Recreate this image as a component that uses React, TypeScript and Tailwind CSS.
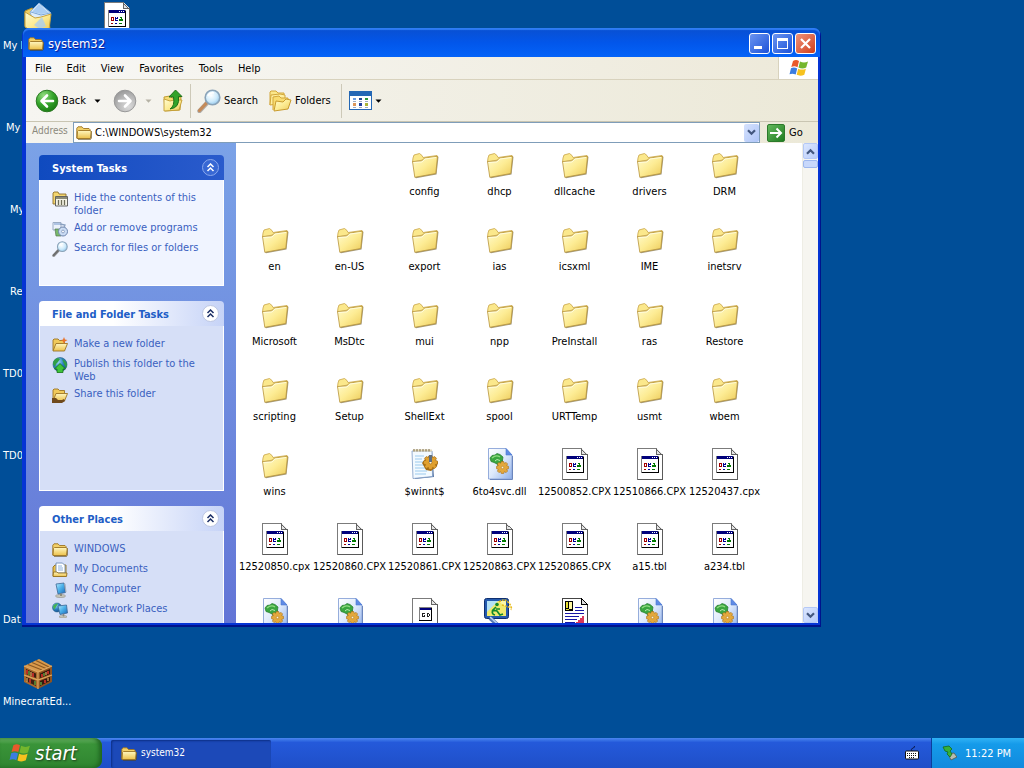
import type { ReactNode } from "react";

const UI_FONT = "font-['DejaVu_Sans_Condensed','Noto_Sans',sans-serif]";

function Gradients() {
  return (
    <svg width="0" height="0" className="absolute" aria-hidden="true">
      <defs>
        <linearGradient id="folder" x1="0" y1="0" x2="1" y2="1">
          <stop offset="0" stopColor="#fffcd2" />
          <stop offset="0.5" stopColor="#fdec94" />
          <stop offset="1" stopColor="#ecca58" />
        </linearGradient>
        <linearGradient id="smallFolder" x1="0" y1="0" x2="0" y2="1">
          <stop offset="0" stopColor="#fff7c0" />
          <stop offset="1" stopColor="#ecc14b" />
        </linearGradient>
        <radialGradient id="green" cx="0.35" cy="0.25" r="0.85">
          <stop offset="0" stopColor="#93dc80" />
          <stop offset="0.5" stopColor="#35a52c" />
          <stop offset="1" stopColor="#16750f" />
        </radialGradient>
        <radialGradient id="grey" cx="0.35" cy="0.25" r="0.85">
          <stop offset="0" stopColor="#dcdcdc" />
          <stop offset="0.6" stopColor="#b4b4b4" />
          <stop offset="1" stopColor="#929292" />
        </radialGradient>
        <radialGradient id="lens" cx="0.4" cy="0.35" r="0.7">
          <stop offset="0" stopColor="#ffffff" />
          <stop offset="0.6" stopColor="#cdeafb" />
          <stop offset="1" stopColor="#8fc4ea" />
        </radialGradient>
        <linearGradient id="page" x1="0" y1="0" x2="1" y2="1">
          <stop offset="0" stopColor="#ffffff" />
          <stop offset="0.5" stopColor="#dde9fb" />
          <stop offset="1" stopColor="#8fb0ea" />
        </linearGradient>
        <radialGradient id="globe" cx="0.35" cy="0.3" r="0.8">
          <stop offset="0" stopColor="#9fdcf5" />
          <stop offset="0.5" stopColor="#2b7fc4" />
          <stop offset="1" stopColor="#114a86" />
        </radialGradient>
        <linearGradient id="screen" x1="0" y1="0" x2="1" y2="1">
          <stop offset="0" stopColor="#b5ecff" />
          <stop offset="0.5" stopColor="#48aee8" />
          <stop offset="1" stopColor="#1c66b8" />
        </linearGradient>
      </defs>
    </svg>
  );
}

/* ---------- large 32px icons ---------- */

function FolderIcon() {
  return (
    <svg width="32" height="32" viewBox="0 0 32 32">
      <path d="M6 29.500 7 30.300 27.500 26.500 29.500 9 28.500 8Z" fill="#5a4a1c" opacity=".55" />
      <path d="M3.500 14 4 10 5 7 10.500 5.500 13 7.500 14 9.500 28 7.500 28.500 9Z" fill="#fbe88c" stroke="#c9a547" strokeWidth=".8" strokeLinejoin="round" />
      <path d="M3.500 13.500 12.500 13 15.500 10 28.500 8.300 26.800 25.500 5.800 29.300Z" fill="url(#folder)" stroke="#b8933a" strokeWidth=".8" strokeLinejoin="round" />
      <path d="M4.500 14.500 13 14 16 11 27 9.500" fill="none" stroke="#fffde2" strokeWidth=".9" />
    </svg>
  );
}

function SheetOutline() {
  return (
    <>
      <path d="M3.500 .5H22.500L28.500 6.500V31.500H3.500Z" fill="#fff" stroke="#7b7b7b" />
      <path d="M22.500 .5V6.500H28.500Z" fill="#e4e4e4" stroke="#555" strokeWidth=".9" />
      <path d="M28.500 7V31.500H4" fill="none" stroke="#5a5a5a" />
    </>
  );
}

function AppFileIcon() {
  return (
    <svg width="32" height="32" viewBox="0 0 32 32" shapeRendering="crispEdges">
      <SheetOutline />
      <path d="M7 8h18v17H7z" fill="#808080" />
      <path d="M8 9h16v15H8z" fill="#fff" />
      <path d="M8 8h16v3H8z" fill="#00007b" />
      <path d="M18 9h1v1h-1zM20 9h1v1h-1zM22 9h1v1h-1z" fill="#fff" />
      <path d="M24 9h1v16H8v-1h16z" fill="#000" />
      <path d="M10 15h3v1h-3zM10 16h1v2h-1zM12 16h1v3h-1zM10 18h2v1h-2z" fill="#a00000" />
      <path d="M14 15h1v4h-1zM15 16h2v1h-2zM16 15h1v1h-1zM15 18h2v1h-2z" fill="#000090" />
      <path d="M19 15h2v1h-2zM18 17h4v2h-4zM20 16h1v1h-1z" fill="#007800" />
      <path d="M10 21h2v1h-2z" fill="#a00000" />
      <path d="M14 21h2v1h-2z" fill="#000090" />
      <path d="M18 21h3v1h-3z" fill="#007800" />
    </svg>
  );
}

function SmallAppFileIcon() {
  return (
    <svg width="32" height="32" viewBox="0 0 32 32" shapeRendering="crispEdges">
      <SheetOutline />
      <path d="M10 9h13v14H10z" fill="#808080" />
      <path d="M11 10h11v12H11z" fill="#fff" />
      <path d="M11 10h11v2H11z" fill="#00007b" />
      <path d="M22 10h1v13H10v-1h12z" fill="#000" />
      <path d="M13 15h3v1h-3zM13 16h1v2h-1zM15 17h1v2h-3v-1h2zM18 15h1v4h-1zM19 15h1v1h-1zM20 16h1v2h-1zM19 18h1v1h-1z" fill="#222" />
    </svg>
  );
}

function Gear({ x, y, r, fill, stroke }: { x: number; y: number; r: number; fill: string; stroke: string }) {
  return (
    <g transform={`translate(${x} ${y}) scale(${r / 10})`}>
      <path
        d="M-2-10H2L3-7 6-8.500 8.500-6 7-3 10-2V2L7 3 8.500 6 6 8.500 3 7 2 10H-2L-3 7-6 8.500-8.500 6-7 3-10 2V-2L-7-3-8.500-6-6-8.500-3-7Z"
        fill={fill}
        stroke={stroke}
        strokeWidth="1"
      />
      <circle r="2" fill="#fff6d8" stroke={stroke} strokeWidth="1" />
    </g>
  );
}

function DllIcon() {
  return (
    <svg width="32" height="32" viewBox="0 0 32 32">
      <path d="M4.500 .5H22L28 7V31H4.500Z" fill="url(#page)" stroke="#8aa4d8" strokeWidth=".9" />
      <path d="M22 .5 22 7 28 7Z" fill="#5f8be6" stroke="#4d78d0" strokeWidth=".6" />
      <path d="M28.500 8V31.500H6" fill="none" stroke="#6b86bd" />
      <path d="M12 14 18 11 20 15 14 19Z" fill="#2a6d3f" />
      <path d="M6 10 8 7.500 11 7 13 5.500 16 6.500 19 9 18.500 12 17 15 13 16 10 14.500 7 13.500Z" fill="#3aa640" stroke="#237a2c" strokeWidth=".7" />
      <path d="M8 10q4-3.500 8-1" fill="none" stroke="#8fdc80" strokeWidth="1.300" />
      <path d="M11 13 13 11.500l3 1" fill="none" stroke="#c9f0bb" strokeWidth=".9" />
      <Gear x={18.5} y={19.5} r={6} fill="#e3a83c" stroke="#a9721c" />
    </svg>
  );
}

function IniIcon() {
  return (
    <svg width="32" height="32" viewBox="0 0 32 32">
      <path d="M4 3 23 2 25 29 6 31Z" fill="#5d7aa6" />
      <path d="M3 3H23L23.500 28.500 4 30.500Z" fill="#f3faff" stroke="#7d9ac4" strokeWidth=".8" />
      <path d="M4 1.500h19v2H4z" fill="#e3d9bb" />
      <path d="M5 1v2.500M8 1v2.500M11 1v2.500M14 1v2.500M17 1v2.500M20 1v2.500" stroke="#7a6a45" />
      <path d="M6 8h9M6 11h7M6 14h8M6 17h9M6 20h14M6 23h12M6 26h11" stroke="#9cc9ee" strokeWidth="1.200" />
      <path d="M13 15l4-5 3 2-1-4 3 1 2 3 5 2-1 4-6 5-5-1z" fill="#a46c14" />
      <Gear x={21.5} y={14.5} r={7} fill="#e0a02e" stroke="#a46c14" />
      <path d="M20 7h3v7h-3z" fill="#5f6e80" />
    </svg>
  );
}

function AccessIcon() {
  return (
    <svg width="32" height="32" viewBox="0 0 32 32">
      <rect x=".5" y=".5" width="24" height="20" rx="2" fill="#2459ad" stroke="#0e2f70" />
      <rect x="3" y="3" width="19" height="15" fill="#f0ea6e" />
      <path d="M3 3h11L3 14z" fill="#b4e2f5" />
      <path d="M14 3h8v6z" fill="#fbf7a8" />
      <circle cx="13" cy="6.500" r="1.800" fill="#128a2c" />
      <path d="M12 9 9 12l4 1 3 4 3-1M12 11h4M9 12q-2 4 2 5" fill="none" stroke="#128a2c" strokeWidth="1.700" />
      <path d="M15 4q5-4 9 0t3 8M18 7l10 3" fill="none" stroke="#e8bb18" strokeWidth="1.500" strokeDasharray="2 1" />
      <path d="M6 20 18 31" stroke="#5577b3" strokeWidth="4" />
      <path d="M6 19 18 30" stroke="#b9d2f3" strokeWidth="1.500" />
    </svg>
  );
}

function WritingFileIcon() {
  return (
    <svg width="32" height="32" viewBox="0 0 32 32" shapeRendering="crispEdges">
      <path d="M3.500 .5H22.500L28.500 6.500V31.500H3.500Z" fill="#fff" stroke="#444" />
      <path d="M22.500 .5V6.500H28.500Z" fill="#ddd" stroke="#000" />
      <path d="M6 3h8v10H6z" fill="#000" />
      <path d="M7 4h2v6H7zM7 11h3v1H7z" fill="#e8df32" />
      <path d="M10 4h3v7h-3z" fill="#fff8a0" />
      <path d="M16 9h7v1h-7zM16 12h9v1h-9zM6 15h19v1H6zM6 18h14v1H6zM6 21h12v1H6zM6 24h10v1H6zM6 27h9v1H6z" fill="#1717a5" />
      <path d="M14 26h3v-2h2v-2h2v-2h2v-2h2v10h-3v-3h-5v2h-3z" fill="#d8365a" />
    </svg>
  );
}

function MailFolderIcon() {
  return (
    <svg width="32" height="32" viewBox="0 0 32 32">
      <path d="M3 9 10 6 13 8 26 10 28 27 8 28 3 24Z" fill="#f0cf61" stroke="#b8932f" />
      <path d="M8 10 17 1 29 11 21 24 12 22Z" fill="#dcecfb" stroke="#8db3dc" />
      <path d="M9 10 19 13 28 11" fill="none" stroke="#7ba6d6" />
      <path d="M17 2 27 11 19 12 10 10Z" fill="#a9cdf3" />
      <path d="M3 10 13 16 19 15 29 12 27 28H8L3 25Z" fill="url(#folder)" stroke="#c9a23a" />
      <path d="M12 23 20 15 24 24 18 27Z" fill="#a9cdf0" opacity=".8" />
    </svg>
  );
}

function BookshelfIcon() {
  return (
    <svg width="32" height="32" viewBox="0 0 32 32">
      <path d="M2 8 16 14V31L2 24Z" fill="#a8692c" />
      <path d="M30 8 16 14V31L30 24Z" fill="#8d5320" />
      <path d="M2 8 17 1 30 8 16 14Z" fill="#d99a4c" />
      <path d="M6 6.500 20 12M10 4.500 24 10.500M14 2.500 27 9" stroke="#8b5823" strokeWidth="1.200" />
      <path d="M4 11 14 15.500V20L4 16ZM4 19 14 23V28L4 23Z" fill="#3b1f12" />
      <path d="M18 15.500 28 11V16L18 20ZM18 23 28 19V23L18 28Z" fill="#35190e" />
      <path d="M5 12v4M11 15v4M8 21v4M20 16v3M26 13v3M23 22v3" stroke="#c62f2a" strokeWidth="1.800" />
      <path d="M7 13v4M13 23v4M22 15v3M19 24v3" stroke="#5d9b3d" strokeWidth="1.500" />
      <path d="M9 14v4M5 20v4M24 14v3M26 20v3" stroke="#d9a05a" strokeWidth="1.300" />
      <path d="M2 8 16 14 30 8M16 14V31M2 17 16 22 30 17" fill="none" stroke="#e0a860" strokeWidth="1.200" />
    </svg>
  );
}

/* ---------- toolbar and 16px icons ---------- */

function SmallFolder({ size = 16 }: { size?: number }) {
  return (
    <svg width={size} height={size} viewBox="0 0 16 16">
      <path d="M2 14.500H14.500L15.500 13V6" fill="none" stroke="#5a4718" strokeOpacity=".6" />
      <path d="M.8 3.200 2 1.800H6L7.500 3.500H13L14 4.500V13H.8Z" fill="#f3d067" stroke="#9c7422" strokeWidth=".9" />
      <path d="M1 13.500 1.500 6.500 2.500 5.500H14L15.200 6.500 14.500 13.500Z" fill="url(#smallFolder)" stroke="#9c7422" strokeWidth=".9" />
    </svg>
  );
}

function OpenFolder({ size = 16, badge }: { size?: number; badge?: ReactNode }) {
  return (
    <svg width={size} height={size} viewBox="0 0 16 16">
      <path d="M1 13.500V3L2 2H6L7.500 3.500H12.500V6" fill="#f0c95a" stroke="#9c7422" strokeWidth=".9" />
      <path d="M1 14 4 6.500H15.500L12.500 14Z" fill="url(#smallFolder)" stroke="#9c7422" strokeWidth=".9" />
      {badge}
    </svg>
  );
}

function Magnifier({ size = 16, handle }: { size?: number; handle: string }) {
  return (
    <svg width={size} height={size} viewBox="0 0 24 24">
      <path d="M10 14 2.500 22" stroke="#6d6d6d" strokeWidth="4.500" strokeLinecap="round" opacity=".5" />
      <path d="M10 13.500 2.500 21.500" stroke={handle} strokeWidth="3.200" strokeLinecap="round" />
      <circle cx="15.500" cy="8.500" r="7.300" fill="url(#lens)" stroke="#8aa3b8" strokeWidth="1.600" />
      <path d="M11 7q2-4 6-3" fill="none" stroke="#fff" strokeWidth="1.600" />
    </svg>
  );
}

function RoundArrow({ fill, edge, flip }: { fill: string; edge: string; flip?: boolean }) {
  return (
    <svg width="24" height="24" viewBox="0 0 24 24" className={flip ? "rotate-180" : ""}>
      <circle cx="12" cy="12" r="10.800" fill={fill} stroke={edge} />
      <path d="M18 12H7M12 6.500 6.500 12 12 17.500" fill="none" stroke="#fff" strokeWidth="2.600" strokeLinecap="round" strokeLinejoin="round" />
    </svg>
  );
}

function UpIcon() {
  return (
    <svg width="22" height="24" viewBox="0 0 22 24">
      <path d="M2 8 8 7 10 9 19 8 18 21 3 22Z" fill="#f6dd74" stroke="#c29c34" />
      <path d="M2 22V10L8 12 12 11H20L17 21Z" fill="url(#folder)" stroke="#c29c34" strokeWidth=".9" />
      <path d="M8 20Q13 17 11.500 8H7L13.500 1 20 7.500H16.500Q18 19 8 20Z" fill="#32a32a" stroke="#176b12" strokeWidth=".9" />
    </svg>
  );
}

function FoldersIcon() {
  return (
    <svg width="24" height="24" viewBox="0 0 24 24">
      <path d="M2 16V3L3 2H8L10 4H16V8" fill="#fbe78b" stroke="#d2a63a" />
      <path d="M2 16 3 6 12 5 17 6V14Z" fill="#fff0a0" stroke="#d2a63a" />
      <path d="M5 21V8L11 7 13 9H20V12" fill="#f8dc70" stroke="#d2a63a" />
      <path d="M6 22 8 12 15 13 18 10 23 11 20 20Z" fill="url(#folder)" stroke="#c99c2f" />
    </svg>
  );
}

function ViewsIcon() {
  return (
    <svg width="24" height="20" viewBox="0 0 24 20" shapeRendering="crispEdges">
      <path d="M0 0h23v19H0z" fill="#2467b4" />
      <path d="M1 5h21v13H1z" fill="#fff" />
      <path d="M4 7h3v2H4z" fill="#6a9de2" />
      <path d="M10 7h3v2h-3z" fill="#244894" />
      <path d="M16 7h3v2h-3z" fill="#2d9839" />
      <path d="M4 12h3v3H4z" fill="#dc9657" />
      <path d="M10 12h3v3h-3z" fill="#20409e" />
      <path d="M16 12h3v3h-3z" fill="#aab435" />
      <path d="M4 10h3v1H4zM10 10h3v1h-3zM16 10h3v1h-3zM4 16h3v1H4zM10 16h3v1h-3zM16 16h3v1h-3z" fill="#9cabc0" />
    </svg>
  );
}

function WindowsFlag({ size }: { size: number }) {
  return (
    <svg width={size} height={size} viewBox="0 0 20 20">
      <path d="M4 3Q7 1 10 3L8.500 9.200Q5.500 7.500 2.300 9Z" fill="#e8592b" />
      <path d="M11 3.500Q15 5.500 19 3.500L17.200 9.500Q13.500 11.300 9.500 9.500Z" fill="#74b62d" />
      <path d="M2 10.200Q5 8.700 8.200 10.400L6.700 16.500Q3.500 15 .5 16.300Z" fill="#3c7de0" />
      <path d="M9.200 10.700Q13 12.500 16.900 10.700L15.300 16.700Q11.500 18.500 7.700 16.800Z" fill="#f7c21e" />
    </svg>
  );
}

function Globe() {
  return (
    <svg width="16" height="16" viewBox="0 0 16 16">
      <circle cx="8" cy="7.500" r="7" fill="url(#globe)" stroke="#1f5c80" strokeWidth=".6" />
      <path d="M1 7Q1 2 6 1L8 2 6 5 4 7 3 10ZM10 2Q15 4 15 8L14 11 12 7Z" fill="#2f9f45" />
      <path d="M8 6.500 13.500 12H11V15.500H5V12H2.500Z" fill="#3fc53a" stroke="#167218" strokeWidth=".8" />
    </svg>
  );
}

function FolderOptionsIcon() {
  return (
    <svg width="16" height="16" viewBox="0 0 16 16">
      <path d="M1 13V2L2 1H6L7 3H14V13Z" fill="#f4d66f" stroke="#8f712a" strokeWidth=".9" />
      <path d="M3.500 5.500H15.500V15H3.500Z" fill="#f6f4e6" stroke="#555" strokeWidth=".9" />
      <path d="M4 6h11v2H4z" fill="#8b8b78" />
      <path d="M6.500 9v5M9.500 9v5M12.500 9v5" stroke="#6c6c58" strokeWidth="1.300" />
    </svg>
  );
}

function ProgramsIcon() {
  return (
    <svg width="16" height="16" viewBox="0 0 16 16">
      <path d="M1 1.500H9V9H1Z" fill="#eaf1fb" stroke="#9aabc4" />
      <path d="M2 3h6" stroke="#7395cc" />
      <path d="M3 8H9V15H4Z" fill="#78b86c" stroke="#55774f" strokeWidth=".7" />
      <circle cx="11" cy="10.500" r="4.500" fill="#cbdcf4" stroke="#6f85ad" />
      <circle cx="11" cy="10.500" r="1.400" fill="#fff" stroke="#6f85ad" strokeWidth=".7" />
      <path d="M8 3 13 4 12 7" fill="none" stroke="#8aa0c0" strokeWidth="1.300" />
    </svg>
  );
}

function DocumentsIcon() {
  return (
    <svg width="16" height="16" viewBox="0 0 16 16">
      <path d="M1 14V5L3 3H14V14Z" fill="#ecc14b" stroke="#94701f" strokeWidth=".9" />
      <path d="M4 1H10.500L13 3.500V11H4Z" fill="#fff" stroke="#6d8db8" strokeWidth=".9" />
      <path d="M6 4h4M6 6h5M6 8h5" stroke="#8db1de" />
      <path d="M1 14.500 1.500 10H5L6 11H15L14.500 14.500Z" fill="url(#smallFolder)" stroke="#94701f" strokeWidth=".9" />
    </svg>
  );
}

function ComputerIcon() {
  return (
    <svg width="16" height="16" viewBox="0 0 16 16">
      <ellipse cx="8.500" cy="14" rx="5" ry="1.500" fill="#c9c9bd" stroke="#88887c" strokeWidth=".6" />
      <path d="M4 2 12 1 13.500 10.500 6 12Z" fill="url(#screen)" stroke="#3c6796" strokeWidth=".8" />
      <path d="M12 1 13.500 2 14.500 10 13.500 10.500Z" fill="#a4aebb" />
      <path d="M9 11.500V14" stroke="#8b8b80" strokeWidth="2" />
    </svg>
  );
}

function NetworkIcon() {
  return (
    <svg width="16" height="16" viewBox="0 0 16 16">
      <circle cx="5" cy="5.500" r="4.500" fill="url(#globe)" stroke="#1f5c80" strokeWidth=".5" />
      <path d="M1 4Q3 1 6 1.500L4 5 2 8Z" fill="#45b355" />
      <ellipse cx="11" cy="14.700" rx="4" ry="1.200" fill="#c9c9bd" stroke="#88887c" strokeWidth=".5" />
      <path d="M6 4 14.500 3 15.500 11 8 12.500Z" fill="url(#screen)" stroke="#3c6796" strokeWidth=".8" />
      <path d="M11.500 12V14.500" stroke="#8b8b80" strokeWidth="1.600" />
    </svg>
  );
}

function Caret({ color = "#000" }: { color?: string }) {
  return (
    <svg width="7" height="4" viewBox="0 0 7 4">
      <path d="M.5 .5H6.500L3.500 3.700Z" fill={color} />
    </svg>
  );
}

function Chevron({ up }: { up?: boolean }) {
  return (
    <svg width="9" height="7" viewBox="0 0 9 7" className={up ? "rotate-180" : ""}>
      <path d="M1 1.200 4.500 4.700 8 1.200" fill="none" stroke="#43577f" strokeWidth="2.200" />
    </svg>
  );
}

/* ---------- data ---------- */

const folder = <FolderIcon />;
const app = <AppFileIcon />;
const dll = <DllIcon />;

const files: ({ name: string; icon: ReactNode } | null)[] = [
  null,
  null,
  { name: "config", icon: folder },
  { name: "dhcp", icon: folder },
  { name: "dllcache", icon: folder },
  { name: "drivers", icon: folder },
  { name: "DRM", icon: folder },
  { name: "en", icon: folder },
  { name: "en-US", icon: folder },
  { name: "export", icon: folder },
  { name: "ias", icon: folder },
  { name: "icsxml", icon: folder },
  { name: "IME", icon: folder },
  { name: "inetsrv", icon: folder },
  { name: "Microsoft", icon: folder },
  { name: "MsDtc", icon: folder },
  { name: "mui", icon: folder },
  { name: "npp", icon: folder },
  { name: "PreInstall", icon: folder },
  { name: "ras", icon: folder },
  { name: "Restore", icon: folder },
  { name: "scripting", icon: folder },
  { name: "Setup", icon: folder },
  { name: "ShellExt", icon: folder },
  { name: "spool", icon: folder },
  { name: "URTTemp", icon: folder },
  { name: "usmt", icon: folder },
  { name: "wbem", icon: folder },
  { name: "wins", icon: folder },
  null,
  { name: "$winnt$", icon: <IniIcon /> },
  { name: "6to4svc.dll", icon: dll },
  { name: "12500852.CPX", icon: app },
  { name: "12510866.CPX", icon: app },
  { name: "12520437.cpx", icon: app },
  { name: "12520850.cpx", icon: app },
  { name: "12520860.CPX", icon: app },
  { name: "12520861.CPX", icon: app },
  { name: "12520863.CPX", icon: app },
  { name: "12520865.CPX", icon: app },
  { name: "a15.tbl", icon: app },
  { name: "a234.tbl", icon: app },
  { name: "", icon: dll },
  { name: "", icon: dll },
  { name: "", icon: <SmallAppFileIcon /> },
  { name: "", icon: <AccessIcon /> },
  { name: "", icon: <WritingFileIcon /> },
  { name: "", icon: dll },
  { name: "", icon: dll },
];

const desktopIcons = [
  { name: "My D", indent: "pl-[3px]", icon: <MailFolderIcon /> },
  { name: "My", indent: "pl-[6px]" },
  { name: "My", indent: "pl-[10px]" },
  { name: "Re", indent: "pl-[10px]" },
  { name: "TD0", indent: "pl-[3px]" },
  { name: "TD0", indent: "pl-[3px]" },
  { name: "", indent: "pl-[3px]" },
  { name: "Dat", indent: "pl-[3px]" },
  { name: "MinecraftEd...", indent: "pl-[3px]", icon: <BookshelfIcon /> },
];

const panels = [
  {
    title: "System Tasks",
    primary: true,
    size: "min-h-[106px]",
    items: [
      { label: "Hide the contents of this folder", icon: <FolderOptionsIcon /> },
      { label: "Add or remove programs", icon: <ProgramsIcon /> },
      { label: "Search for files or folders", icon: <Magnifier handle="#6f6f6f" /> },
    ],
  },
  {
    title: "File and Folder Tasks",
    size: "min-h-[165px]",
    items: [
      { label: "Make a new folder", icon: <OpenFolder badge={<path d="M12 0 13 2.500 15.500 3 13 4.500 12 7 11 4.500 9 3 11 2.500Z" fill="#e8742a" />} /> },
      { label: "Publish this folder to the Web", icon: <Globe /> },
      { label: "Share this folder", icon: <OpenFolder badge={<path d="M0 11h4l2 2h4l2-1 1 2-3 2H0Z" fill="#6f4a1d" />} /> },
    ],
  },
  {
    title: "Other Places",
    size: "min-h-[125px]",
    items: [
      { label: "WINDOWS", icon: <SmallFolder /> },
      { label: "My Documents", icon: <DocumentsIcon /> },
      { label: "My Computer", icon: <ComputerIcon /> },
      { label: "My Network Places", icon: <NetworkIcon /> },
    ],
  },
];

/* ---------- window parts ---------- */

function TitleBar() {
  const button = "flex size-[21px] items-center justify-center rounded-[3px] border border-white";
  return (
    <header className="flex h-[29px] shrink-0 items-center rounded-t-md bg-linear-to-b from-[#0a4fd0] via-[#0256ea] to-[#0463f8] pt-[2px] pr-1 pl-[5px] shadow-[inset_0_2px_1px_#2f7df5]">
      <SmallFolder />
      <h1 className="ml-1 flex-1 text-[13px] leading-4 font-medium text-white [text-shadow:1px_1px_1px_#0f1089]">system32</h1>
      <div className="flex gap-[2px]">
        <button aria-label="Minimize" className={`${button} bg-linear-to-br from-[#6a93f0] to-[#1c50d8]`}>
          <svg width="13" height="13"><path d="M1 9h8v3H1z" fill="#fff" /></svg>
        </button>
        <button aria-label="Maximize" className={`${button} bg-linear-to-br from-[#6a93f0] to-[#1c50d8]`}>
          <svg width="13" height="13"><path d="M1 1h11v11H1zM2 4v7h9V4z" fill="#fff" fillRule="evenodd" /></svg>
        </button>
        <button aria-label="Close" className={`${button} bg-linear-to-br from-[#ee9279] to-[#cf3a12]`}>
          <svg width="13" height="13"><path d="M2 2 11 11M11 2 2 11" stroke="#fff" strokeWidth="2.200" /></svg>
        </button>
      </div>
    </header>
  );
}

function MenuBar() {
  return (
    <nav className="flex h-[23px] shrink-0 border-b border-[#d8d2bd] bg-linear-to-r from-[#f8f8f6] to-[#ede9d9]">
      <div className="flex flex-1 items-center gap-[15px] pl-[9px]">
        {["File", "Edit", "View", "Favorites", "Tools", "Help"].map((item) => (
          <button key={item}>{item}</button>
        ))}
      </div>
      <div className="flex w-10 items-center justify-center border-l border-[#d8d2bd] bg-white">
        <WindowsFlag size={20} />
      </div>
    </nav>
  );
}

function Toolbar() {
  return (
    <div className="flex h-[42px] shrink-0 items-center border-b border-[#c9c5b2] bg-linear-to-r from-[#f6f5f1] to-[#ece9d8] pl-[9px]">
      <button className="flex items-center gap-[3px]">
        <RoundArrow fill="url(#green)" edge="#2c7a24" />
        Back
      </button>
      <button aria-label="Back history" className="ml-2"><Caret /></button>
      <button aria-label="Forward" className="ml-3"><RoundArrow fill="url(#grey)" edge="#999" flip /></button>
      <button aria-label="Forward history" className="ml-2"><Caret color="#b5b2a5" /></button>
      <button aria-label="Up" className="ml-[10px]"><UpIcon /></button>
      <div className="mx-[6px] h-[34px] w-px bg-[#cdc9b8]" />
      <button className="flex items-center gap-[3px]">
        <Magnifier size={24} handle="#c58a58" />
        Search
      </button>
      <button className="ml-[10px] flex items-center gap-[3px]">
        <FoldersIcon />
        Folders
      </button>
      <div className="mr-[7px] ml-[10px] h-[34px] w-px bg-[#cdc9b8]" />
      <button aria-label="Views" className="flex items-center gap-[2px]">
        <ViewsIcon />
        <Caret />
      </button>
    </div>
  );
}

function AddressBar() {
  return (
    <div className="flex h-[21px] shrink-0 items-center bg-linear-to-r from-[#f4f3ee] to-[#ece9d8]">
      <label htmlFor="address" className="w-[47px] pb-1 pl-[6px] text-[10px] text-[#8b897c]">Address</label>
      <div className="flex h-full flex-1 items-center border border-[#7f9db9] bg-white pl-[2px]">
        <SmallFolder />
        <input id="address" defaultValue="C:\WINDOWS\system32" className="min-w-0 flex-1 pl-[3px] outline-none" />
        <button aria-label="Address list" className="flex h-[18px] w-[15px] items-center justify-center rounded-xs bg-linear-to-br from-[#d6e2fd] to-[#aec5f8]">
          <Chevron />
        </button>
      </div>
      <button className="flex w-[58px] items-center gap-1 pl-[7px]">
        <span className="flex size-[18px] items-center justify-center rounded-xs border border-[#2b7a2b] bg-linear-to-br from-[#62b85c] to-[#1d7d1f]">
          <svg width="14" height="14"><path d="M1 7H12M7.500 2.500 12 7 7.500 11.500" fill="none" stroke="#fff" strokeWidth="2" /></svg>
        </span>
        Go
      </button>
    </div>
  );
}

function TaskPanel({ title, primary, size, items }: (typeof panels)[number]) {
  return (
    <section className="shrink-0">
      <div
        className={`flex h-[25px] items-center rounded-t-[4px] pr-[5px] pl-[13px] ${
          primary ? "bg-linear-to-r from-[#0f4abf] to-[#2a5bcc] text-white" : "bg-linear-to-r from-white from-40% to-[#c6d3f7] text-[#215dc6]"
        }`}
      >
        <h2 className="flex-1 pt-[2px] font-bold">{title}</h2>
        <button
          aria-label={`Collapse ${title}`}
          className={`flex size-[17px] items-center justify-center rounded-full border ${
            primary ? "border-[#8aa8ec] bg-[#3868d4] text-white" : "border-[#bcc6e2] bg-white text-[#1c2f66]"
          }`}
        >
          <svg width="9" height="9" viewBox="0 0 9 9" fill="none" stroke="currentColor" strokeWidth="1.500">
            <path d="M1.500 4 4.500 1 7.500 4M1.500 8 4.500 5 7.500 8" />
          </svg>
        </button>
      </div>
      <ul
        className={`${size} flex flex-col gap-1 border border-t-0 border-white pt-[11px] pr-5 pl-3 leading-[13px] text-[#3a5fc0] ${
          primary ? "bg-[#f0f4ff]" : "bg-[#d6dff7]"
        }`}
      >
        {items.map((item) => (
          <li key={item.label}>
            <a href="#" className="flex gap-[6px]">
              <span className="size-4 shrink-0">{item.icon}</span>
              {item.label}
            </a>
          </li>
        ))}
      </ul>
    </section>
  );
}

function ScrollBar() {
  const button = "flex h-4 w-[15px] items-center justify-center rounded-xs border border-[#b4c8f6] bg-linear-to-br from-[#dbe6fe] to-[#b7cbf9]";
  return (
    <div className="flex w-4 shrink-0 flex-col items-center border-l border-[#eeede5] bg-[#f6f5f0]">
      <button aria-label="Scroll up" className={button}><Chevron up /></button>
      <div className="mt-px h-2 w-[15px] rounded-xs border border-[#9db7ee] bg-[#c8d8fb]" />
      <div className="flex-1" />
      <button aria-label="Scroll down" className={button}><Chevron /></button>
    </div>
  );
}

function ExplorerWindow() {
  return (
    <div className="absolute top-[28px] right-[203px] bottom-[111px] left-[22px] flex flex-col rounded-t-lg bg-[#0534d4] pr-[3px] pb-[4px] pl-[4px] shadow-[inset_-1px_-2px_0_#00138c]">
      <div className="-mr-[2px] -ml-[3px] shrink-0">
        <TitleBar />
      </div>
      <MenuBar />
      <Toolbar />
      <AddressBar />
      <div className="flex min-h-0 flex-1 overflow-hidden bg-white">
        <aside className="flex w-[210px] shrink-0 flex-col gap-[15px] overflow-hidden bg-linear-to-b from-[#7ba2e7] to-[#6375d6] pt-3 pr-3 pl-[13px]">
          {panels.map((panel) => (
            <TaskPanel key={panel.title} {...panel} />
          ))}
        </aside>
        <main className="grid min-w-0 flex-1 auto-rows-[75px] grid-cols-[repeat(auto-fill,75px)] overflow-hidden pt-[5px] pl-px">
          {files.map((file, index) => (
            <div key={index} className="flex flex-col items-center gap-[5px] leading-[13px]">
              {file?.icon}
              {file?.name && <span className="whitespace-nowrap">{file.name}</span>}
            </div>
          ))}
        </main>
        <ScrollBar />
      </div>
    </div>
  );
}

function Taskbar() {
  return (
    <footer className="flex h-[30px] shrink-0 bg-linear-to-b from-[#4a86f0] from-0% via-[#2459da] via-15% to-[#1f4fc8] text-white">
      <button className="flex w-[102px] items-center gap-1 rounded-r-lg bg-linear-to-b from-[#6cb868] via-[#3a9439] via-20% to-[#2f8530] pl-[9px] shadow-[inset_-3px_0_4px_#1f6420]">
        <WindowsFlag size={22} />
        <span className="text-[20px] leading-6 font-medium italic [text-shadow:1px_1px_2px_#1b3f1b]">start</span>
      </button>
      <button className="mt-[2px] ml-[9px] flex w-40 items-center gap-1 rounded-xs bg-[#1c49b8] pl-[10px] text-[10px] shadow-[inset_1px_1px_2px_#0c2f86]">
        <SmallFolder />
        <span className="pb-1">system32</span>
      </button>
      <div className="flex flex-1 items-center justify-end pr-3">
        <svg width="14" height="14" viewBox="0 0 14 14">
          <path d="M7 5Q5 3 8 2T9 0" fill="none" stroke="#0a1a50" />
          <rect x=".5" y="5" width="13" height="8" rx="1" fill="#fff" stroke="#111" />
          <path d="M2 7.500h10M2 9.500h10M4 11.500h6" stroke="#111" strokeDasharray="1 1" />
        </svg>
      </div>
      <div className="flex w-[93px] items-center gap-2 border-l border-[#0b3f9c] bg-linear-to-b from-[#2fb2f5] via-[#159bea] via-20% to-[#128ade] pl-[10px]">
        <svg width="15" height="16" viewBox="0 0 15 16">
          <path d="M6 9 12 8 15 12 9 15Z" fill="#b9bcae" stroke="#54584b" strokeWidth=".8" />
          <path d="M1 2 7 1 10 4 8 6 10 9 8 12 5 9 6 7 3 6Z" fill="#35b13a" stroke="#14691a" strokeWidth=".8" />
        </svg>
        <time>11:22 PM</time>
      </div>
    </footer>
  );
}

export default function App() {
  return (
    <div className={`${UI_FONT} flex h-screen flex-col overflow-hidden bg-[#004e98] text-[11px] leading-[13px] text-black`}>
      <Gradients />
      <div className="relative flex min-h-0 flex-1 gap-1 text-white">
        <div className="w-[75px] shrink-0">
          {desktopIcons.map((item, index) => (
            <div key={index} className="flex h-[82px] flex-col gap-[5px] pt-[2px]">
              <div className="mx-auto size-8">{item.icon}</div>
              <span className={`${item.indent} whitespace-nowrap`}>{item.name}</span>
            </div>
          ))}
        </div>
        <div className="flex w-[75px] justify-center pt-[2px]">
          <AppFileIcon />
        </div>
        <div className="text-black">
          <ExplorerWindow />
        </div>
      </div>
      <Taskbar />
    </div>
  );
}
